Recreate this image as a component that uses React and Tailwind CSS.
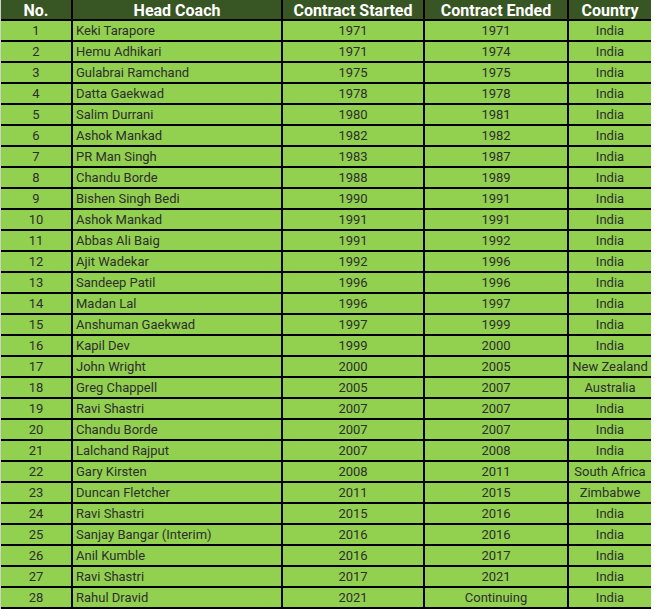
import React from 'react';

const coaches = [
  ['1', 'Keki Tarapore', '1971', '1971', 'India'],
  ['2', 'Hemu Adhikari', '1971', '1974', 'India'],
  ['3', 'Gulabrai Ramchand', '1975', '1975', 'India'],
  ['4', 'Datta Gaekwad', '1978', '1978', 'India'],
  ['5', 'Salim Durrani', '1980', '1981', 'India'],
  ['6', 'Ashok Mankad', '1982', '1982', 'India'],
  ['7', 'PR Man Singh', '1983', '1987', 'India'],
  ['8', 'Chandu Borde', '1988', '1989', 'India'],
  ['9', 'Bishen Singh Bedi', '1990', '1991', 'India'],
  ['10', 'Ashok Mankad', '1991', '1991', 'India'],
  ['11', 'Abbas Ali Baig', '1991', '1992', 'India'],
  ['12', 'Ajit Wadekar', '1992', '1996', 'India'],
  ['13', 'Sandeep Patil', '1996', '1996', 'India'],
  ['14', 'Madan Lal', '1996', '1997', 'India'],
  ['15', 'Anshuman Gaekwad', '1997', '1999', 'India'],
  ['16', 'Kapil Dev', '1999', '2000', 'India'],
  ['17', 'John Wright', '2000', '2005', 'New Zealand'],
  ['18', 'Greg Chappell', '2005', '2007', 'Australia'],
  ['19', 'Ravi Shastri', '2007', '2007', 'India'],
  ['20', 'Chandu Borde', '2007', '2007', 'India'],
  ['21', 'Lalchand Rajput', '2007', '2008', 'India'],
  ['22', 'Gary Kirsten', '2008', '2011', 'South Africa'],
  ['23', 'Duncan Fletcher', '2011', '2015', 'Zimbabwe'],
  ['24', 'Ravi Shastri', '2015', '2016', 'India'],
  ['25', 'Sanjay Bangar (Interim)', '2016', '2016', 'India'],
  ['26', 'Anil Kumble', '2016', '2017', 'India'],
  ['27', 'Ravi Shastri', '2017', '2021', 'India'],
  ['28', 'Rahul Dravid', '2021', 'Continuing', 'India'],
];

const headers = ['No.', 'Head Coach', 'Contract Started', 'Contract Ended', 'Country'];

const App = () => {
  return (
    <div className="bg-white min-h-screen" style={{ fontFamily: 'Roboto, "Liberation Sans", sans-serif' }}>
      <div className="w-[651px] border-l border-[#d0d0d0]">
        <div className="grid grid-cols-[70px_208px_140px_142px_82px] auto-rows-[19px] gap-[2px] bg-black pb-[2px]">
          {headers.map((h) => (
            <div
              key={h}
              className="bg-[#375623] text-white font-bold text-[16px] leading-[21px] text-center whitespace-nowrap overflow-hidden"
            >
              {h}
            </div>
          ))}
          {coaches.map((row) =>
            row.map((cell, i) => (
              <div
                key={row[0] + '-' + i}
                className={
                  'bg-[#92d050] text-[#2e2e2e] text-[13px] leading-[19px] whitespace-nowrap overflow-hidden ' +
                  (i === 1 ? 'text-left pl-[3px]' : 'text-center')
                }
              >
                {cell}
              </div>
            ))
          )}
        </div>
      </div>
    </div>
  );
};

export default App;
